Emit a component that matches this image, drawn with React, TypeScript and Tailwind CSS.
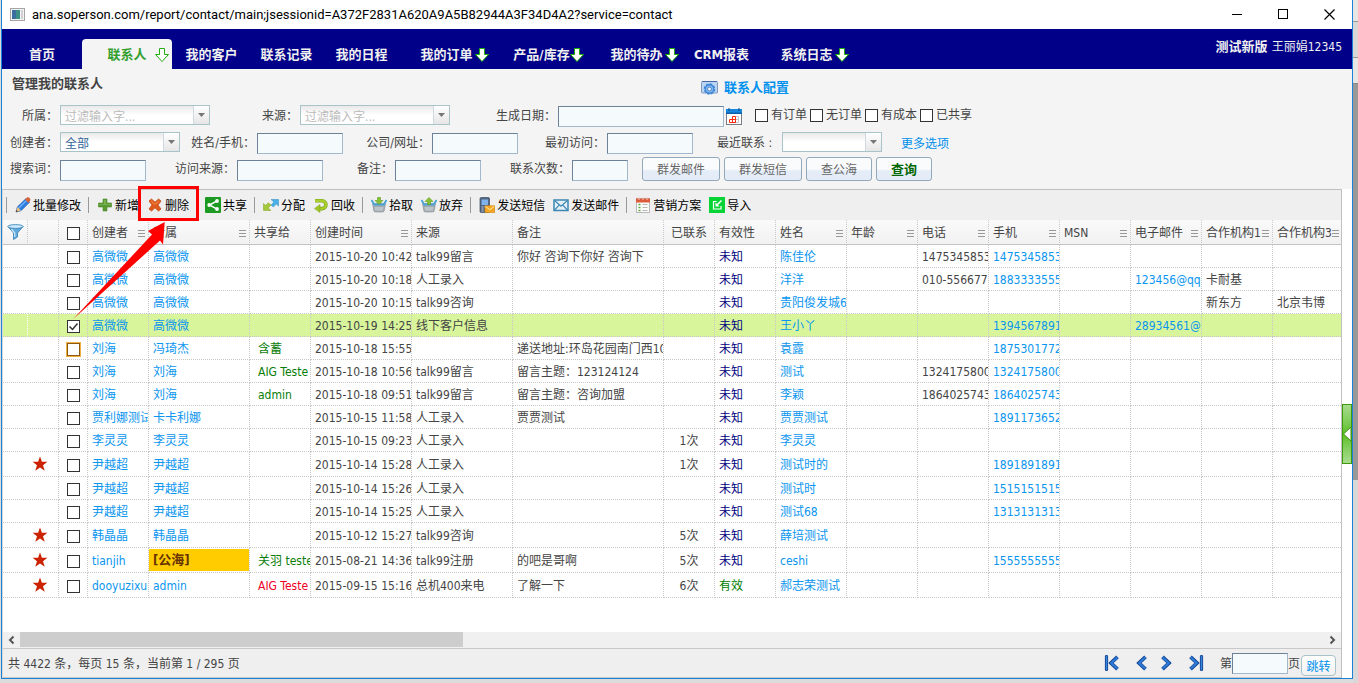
import React, { useState } from 'react';
import clsx from 'clsx';

interface Contact {
    star?: boolean;
    creator: string;
    owner: string;
    publicPool?: boolean;
    shared?: string;
    sharedAlert?: boolean;
    createdAt: string;
    source?: string;
    remark?: string;
    times?: string;
    valid?: boolean;
    name: string;
    phone?: string;
    mobile?: string;
    email?: string;
    org1?: string;
    org3?: string;
}

const contacts: Contact[] = [
    { creator: '高微微', owner: '高微微', createdAt: '2015-10-20 10:42', source: 'talk99留言', remark: '你好 咨询下你好 咨询下', name: '陈佳伦', phone: '1475345853', mobile: '1475345853' },
    { creator: '高微微', owner: '高微微', createdAt: '2015-10-20 10:18', source: '人工录入', name: '洋洋', phone: '010-556677', mobile: '1883333555', email: '123456@qq', org1: '卡耐基' },
    { creator: '高微微', owner: '高微微', createdAt: '2015-10-20 10:15', source: 'talk99咨询', name: '贵阳俊发城6', org1: '新东方', org3: '北京韦博' },
    { creator: '高微微', owner: '高微微', createdAt: '2015-10-19 14:25', source: '线下客户信息', name: '王小丫', mobile: '1394567891', email: '28934561@' },
    { creator: '刘海', owner: '冯琦杰', shared: '含蓄', createdAt: '2015-10-18 15:55', remark: '递送地址:环岛花园南门西10', name: '袁露', mobile: '1875301772' },
    { creator: '刘海', owner: '刘海', shared: 'AIG Teste', createdAt: '2015-10-18 10:56', source: 'talk99留言', remark: '留言主题：123124124', name: '测试', phone: '1324175800', mobile: '1324175800' },
    { creator: '刘海', owner: '刘海', shared: 'admin', createdAt: '2015-10-18 09:51', source: 'talk99留言', remark: '留言主题：咨询加盟', name: '李颖', phone: '1864025743', mobile: '1864025743' },
    { creator: '贾利娜测试', owner: '卡卡利娜', createdAt: '2015-10-15 11:58', source: '人工录入', remark: '贾贾测试', name: '贾贾测试', mobile: '1891173652' },
    { creator: '李灵灵', owner: '李灵灵', createdAt: '2015-10-15 09:23', source: '人工录入', times: '1次', name: '李灵灵' },
    { star: true, creator: '尹越超', owner: '尹越超', createdAt: '2015-10-14 15:28', source: '人工录入', times: '1次', name: '测试时的', mobile: '1891891891' },
    { creator: '尹越超', owner: '尹越超', createdAt: '2015-10-14 15:26', source: '人工录入', name: '测试时', mobile: '1515151515' },
    { creator: '尹越超', owner: '尹越超', createdAt: '2015-10-14 15:25', source: '人工录入', name: '测试68', mobile: '1313131313' },
    { star: true, creator: '韩晶晶', owner: '韩晶晶', createdAt: '2015-10-12 15:27', source: 'talk99咨询', times: '5次', name: '薛培测试' },
    { star: true, creator: 'tianjih', owner: '[公海]', publicPool: true, shared: '关羽 teste', createdAt: '2015-08-21 14:36', source: 'talk99注册', remark: '的吧是哥啊', times: '5次', name: 'ceshi', mobile: '1555555555' },
    { star: true, creator: 'dooyuzixun', owner: 'admin', shared: 'AIG Teste', sharedAlert: true, createdAt: '2015-09-15 15:16', source: '总机400来电', remark: '了解一下', times: '6次', valid: true, name: '郝志荣测试' },
];

const columns = [
    { label: '创建者', width: 'w-[61px]', menu: true },
    { label: '所属', width: 'w-[101px]', menu: true },
    { label: '共享给', width: 'w-[61px]' },
    { label: '创建时间', width: 'w-[101px]', menu: true },
    { label: '来源', width: 'w-[101px]' },
    { label: '备注', width: 'w-[151px]' },
    { label: '已联系', width: 'w-[51px]', center: true },
    { label: '有效性', width: 'w-[61px]' },
    { label: '姓名', width: 'w-[71px]', menu: true },
    { label: '年龄', width: 'w-[71px]', menu: true },
    { label: '电话', width: 'w-[71px]', menu: true },
    { label: '手机', width: 'w-[71px]', menu: true },
    { label: 'MSN', width: 'w-[71px]', menu: true },
    { label: '电子邮件', width: 'w-[71px]', menu: true },
    { label: '合作机构1', width: 'w-[71px]', menu: true },
    { label: '合作机构3', width: '', menu: true },
];

const navItems = [
    { label: '我的客户' },
    { label: '联系记录' },
    { label: '我的日程' },
    { label: '我的订单', arrow: true },
    { label: '产品/库存', arrow: true },
    { label: '我的待办', arrow: true },
    { label: 'CRM报表' },
    { label: '系统日志', arrow: true },
];

/* ---------- icons ---------- */

const DownArrow = ({ className }: { className?: string }) => (
    <svg viewBox="0 0 14 14" className={clsx('h-3.5 w-3.5', className)} fill="#fff" stroke="#1fae0c" strokeWidth="1">
        <path d="M4.500.5h5v6h4L7 13.500.5 6.500h4z" />
    </svg>
);

const PencilIcon = () => (
    <svg viewBox="0 0 16 16" className="h-4 w-4">
        <path d="M1 15l1.300-5L11 1.600l3.600 3.500L6 13.700z" fill="#2b7de0" stroke="#1a56ac" strokeWidth=".7" />
        <path d="M3.200 10.400l8.600-8.200 1 1-8.500 8.200z" fill="#6db0fa" />
        <path d="M10 2.500l1.700-1.700c.8-.8 2-.6 2.900.3.9.9 1 2 .3 2.900l-1.600 1.800z" fill="#d8623a" />
        <path d="M1 15l1.400-4.900 3.600 3.500z" fill="#f3c37a" />
        <path d="M1 15l.5-1.900 1.400 1.400z" fill="#333" />
    </svg>
);

const PlusIcon = () => (
    <svg viewBox="0 0 16 16" className="h-4 w-4">
        <path d="M6 2h4v4h4.500v4H10v4H6v-4H1.500V6H6z" fill="#5b9a32" stroke="#4b8a28" strokeWidth=".6" />
        <path d="M7 3h2v4h4.500v1H2.500V7H7z" fill="#78b04e" />
    </svg>
);

const CrossIcon = () => (
    <svg viewBox="0 0 16 16" className="h-4 w-4">
        <path d="M2 4l2.500-2L8 5.200 11.500 2 14 4l-3 4 3 4-2.500 2L8 10.800 4.500 14 2 12l3-4z" fill="#dd5a1c" stroke="#c44a12" strokeWidth=".8" strokeLinejoin="round" />
        <path d="M3.500 4l1-.8L8 6.500l3.500-3.300 1 .8-2.800 3.400H6.300z" fill="#ea7638" />
    </svg>
);

const ShareIcon = () => (
    <svg viewBox="0 0 16 16" className="h-4 w-4">
        <rect width="16" height="16" rx="1" fill="#1d9a21" />
        <path d="M12 3.800L4.500 8 12 12.200" fill="none" stroke="#fff" strokeWidth="1.500" />
        <circle cx="12" cy="4" r="1.900" fill="#fff" />
        <circle cx="4.200" cy="8" r="1.900" fill="#fff" />
        <circle cx="12" cy="12" r="1.900" fill="#fff" />
    </svg>
);

const AssignIcon = () => (
    <svg viewBox="0 0 16 16" className="h-4 w-4">
        <path d="M8 2.500h7.500V9l-2.200-2-3 3L8 8l3-3z" fill="#4bb1e8" stroke="#2c88c0" strokeWidth=".5" />
        <path d="M8 13.500H.5V6.500l2.200 2 2.500-2.700L8 8l-2.800 3z" fill="#a3c83a" stroke="#7fa021" strokeWidth=".5" />
    </svg>
);

const RecycleIcon = () => (
    <svg viewBox="0 0 16 16" className="h-4 w-4">
        <path d="M2 3.800h7a3.900 3.900 0 010 7.800H6" fill="none" stroke="#7da517" strokeWidth="3.600" />
        <path d="M2 3.800h7a3.900 3.900 0 010 7.800H6" fill="none" stroke="#a9cf2f" strokeWidth="2.400" />
        <path d="M7 7.500v8L1.500 11.600z" fill="#a0c626" stroke="#7da517" strokeWidth=".5" />
    </svg>
);

const BasketIcon = ({ up }: { up?: boolean }) => (
    <svg viewBox="0 0 16 16" className="h-4 w-4">
        <path d="M1.500 6.500h13L13 14.500c-.2.700-9.800.700-10 0z" fill="#a3abb2" stroke="#858d94" strokeWidth=".6" />
        <path d="M3.500 10h9l-.6 3.700H4.100z" fill="#bcc3c9" />
        <path d="M.5 3l2.800 4.500h9.400L15.500 3" fill="none" stroke="#4aa3d6" strokeWidth="1.800" />
        <path d={up ? 'M6.500 7.500h3V4.500h2.500L8 .5 4 4.500h2.500z' : 'M6.500.5h3v3H12l-4 4-4-4h2.500z'} fill="#86c035" stroke="#5e9a1c" strokeWidth=".6" />
    </svg>
);

const SmsIcon = () => (
    <svg viewBox="0 0 16 16" className="h-4 w-4">
        <rect x="1" y=".5" width="9.500" height="15" rx="1.200" fill="#52657f" stroke="#3b4c63" strokeWidth=".7" />
        <rect x="2.500" y="2.500" width="6.500" height="5.500" fill="#7fb1ea" />
        <path d="M2.500 10h2m1 0h2M2.500 12h2m-2 2h2" stroke="#c3ccd8" strokeWidth="1" />
        <rect x="6" y="8.800" width="9.700" height="6.700" fill="#f5a81f" stroke="#cf8410" strokeWidth=".6" />
        <path d="M6.300 9.200l4.500 3.600 4.600-3.600" fill="none" stroke="#fff0c4" strokeWidth=".9" />
    </svg>
);

const MailIcon = () => (
    <svg viewBox="0 0 16 16" className="h-4 w-4">
        <rect x="1" y="3" width="14" height="10.500" fill="#e3f0f8" stroke="#3c86b4" strokeWidth="1.500" />
        <path d="M1.800 3.800L8 9.300l6.200-5.500M1.800 12.800l4.500-5m7.900 5l-4.500-5" fill="none" stroke="#3c86b4" strokeWidth="1.200" />
    </svg>
);

const PlanIcon = () => (
    <svg viewBox="0 0 16 16" className="h-4 w-4">
        <rect x="1.500" y="1.500" width="13" height="14" fill="#fcfcfc" stroke="#a8a8a8" strokeWidth=".8" />
        <path d="M1 1.500h14v4H1z" fill="#dd5a3a" />
        <path d="M4 0v3m4-3v3m4-3v3" stroke="#f3c9bd" strokeWidth="1" />
        <path d="M3.500 7.500h2m-2 3h2m-2 3h2" stroke="#5da83a" strokeWidth="1.600" />
        <path d="M7.500 7.500h5m-5 3h5m-5 3h5" stroke="#b6b6b6" strokeWidth="1" />
    </svg>
);

const ImportIcon = () => (
    <svg viewBox="0 0 16 16" className="h-4 w-4">
        <rect width="16" height="16" fill="#06d435" />
        <path d="M7.500 4.500h-3v7.500h7.500V9" fill="none" stroke="#fff" strokeWidth="1.200" />
        <path d="M12.500 3.500L8 8" stroke="#fff" strokeWidth="1.500" />
        <path d="M6.500 5.500v4h4z" fill="#fff" />
    </svg>
);

const ConfigIcon = () => (
    <svg viewBox="0 0 17 16" className="h-4 w-[17px]">
        <rect x=".5" y="1.500" width="16" height="11.500" rx="1" fill="#b9d5f2" stroke="#8097c0" />
        <path d="M1 1.500h15" stroke="#4668a5" strokeWidth="1" />
        <circle cx="8.500" cy="9" r="4.900" fill="#3f86d8" stroke="#3f86d8" strokeWidth="1.600" strokeDasharray="2.400 1.400" />
        <circle cx="8.500" cy="9" r="3.600" fill="#85b9ee" />
        <circle cx="8.500" cy="9" r="1.900" fill="#f2f8fe" stroke="#2f68b4" strokeWidth=".7" />
    </svg>
);

const CalendarIcon = () => (
    <svg viewBox="0 0 16 17" className="h-[17px] w-4">
        <rect x=".5" y="1.500" width="15" height="15" fill="#fff" stroke="#777c85" />
        <path d="M0 1h16v5H0z" fill="#1687dd" />
        <path d="M0 4.500h16v1.500H0z" fill="#0a5eaa" />
        <path d="M3 0v3m10-3v3" stroke="#0b4a86" strokeWidth="1" />
        <path d="M3.500 11.500h6v3h-6zM6.500 8.500h3v6h-3z" fill="none" stroke="#fa2a0a" />
        <path d="M10 8.500h2.500v6H10M10 11.500h2.500" fill="none" stroke="#c2c6cc" />
    </svg>
);

const FilterIcon = () => (
    <svg viewBox="0 0 17 16" className="h-4 w-[17px]">
        <path d="M1 2.500L6.500 9v6.500l4-2.500V9L16 2.500z" fill="#5fa9dc" stroke="#2f7fb8" strokeWidth=".8" />
        <path d="M4.500 5l3.200 4v4" fill="none" stroke="#c6e4f8" strokeWidth="1.300" />
        <ellipse cx="8.500" cy="2.500" rx="7.700" ry="1.900" fill="#cfe9fa" stroke="#2f7fb8" strokeWidth=".8" />
    </svg>
);

const MenuLines = () => (
    <svg viewBox="0 0 7 7" className="h-[7px] w-[7px] shrink-0" shapeRendering="crispEdges">
        <path d="M0 .500h7M0 3.500h7M0 6.500h7" stroke="#999" />
    </svg>
);

const StarIcon = () => (
    <svg viewBox="0 0 16 16" className="mx-auto block h-4 w-4">
        <path d="M8 .600l1.900 5.200h5.500L11 9.200l1.700 5.600L8 11.500l-4.700 3.300L5 9.200.600 5.800h5.500z" fill="#cc2200" />
    </svg>
);

const PagerIcon = ({ last, next }: { last?: boolean; next?: boolean }) => (
    <svg viewBox="0 0 16 16" className={clsx('h-4 w-4', next && 'rotate-180')}>
        {last && <path d="M2.500 1.500v13" stroke="#16499a" strokeWidth="3.200" strokeLinecap="round" />}
        {last && <path d="M2.500 1.500v13" stroke="#3a86dc" strokeWidth="1.300" strokeLinecap="round" />}
        <path d="M13.500 1.800L7 8l6.500 6.200" fill="none" stroke="#16499a" strokeWidth="3.800" />
        <path d="M13.300 2.200L7.300 8l6 5.800" fill="none" stroke="#2f7bd6" strokeWidth="2" />
    </svg>
);

/* ---------- form controls ---------- */

interface FieldProps {
    id: string;
    label: string;
    labelClass: string;
    children: React.ReactNode;
}

const Field = ({ id, label, labelClass, children }: FieldProps) => (
    <>
        <label htmlFor={id} className={clsx('flex shrink-0 items-center justify-end self-stretch whitespace-nowrap pr-0.5', labelClass)}>
            {label}
        </label>
        {children}
    </>
);

const TextBox = ({ id, className }: { id: string; className: string }) => (
    <input
        id={id}
        type="text"
        className={clsx('h-[21px] shrink-0 border border-[#a3b8cc] border-l-[#6d8299] border-t-[#6d8299] bg-[#f5fafd] px-1 outline-none', className)}
    />
);

const Combo = ({ id, option, className, textClass }: { id: string; option: string; className: string; textClass?: string }) => (
    <div className={clsx('relative mb-0.5 h-5 shrink-0', className)}>
        <select
            id={id}
            className={clsx('h-full w-full appearance-none border border-[#a9c3cb] bg-linear-to-b from-[#e9e9e9] via-white to-white pl-1 pt-0.5 outline-none', textClass)}
        >
            <option>{option}</option>
        </select>
        <span className="pointer-events-none absolute inset-y-px right-px flex w-4 items-center justify-center border-l border-[#cfdade] bg-linear-to-b from-white to-[#e6e6e6]">
            <svg viewBox="0 0 7 4" className="h-1 w-[7px]">
                <path d="M0 0h7L3.500 4z" fill="#777" />
            </svg>
        </span>
    </div>
);

const Tick = ({ label, checked, onChange, focused, id }: { label?: string; checked: boolean; onChange: () => void; focused?: boolean; id?: string }) => (
    <span className="relative block h-[13px] w-[13px] shrink-0">
        <input
            id={id}
            type="checkbox"
            aria-label={label}
            checked={checked}
            onChange={onChange}
            className={clsx('block h-[13px] w-[13px] appearance-none border bg-white', focused ? 'border-[#8a5a10] ring-1 ring-[#f0b040]' : 'border-[#333]')}
        />
        {checked && (
            <svg viewBox="0 0 13 13" className="pointer-events-none absolute inset-0" fill="none" stroke="#333" strokeWidth="1.500">
                <path d="M2.500 6.500l3 3 5-6" />
            </svg>
        )}
    </span>
);

const FlagBox = ({ id, label }: { id: string; label: string }) => {
    const [on, setOn] = useState(false);
    return (
        <span className="flex h-5 items-center gap-[3px]">
            <Tick id={id} checked={on} onChange={() => setOn(!on)} />
            <label htmlFor={id} className="whitespace-nowrap pr-[3px]">{label}</label>
        </span>
    );
};

const FormButton = ({ className, children }: { className: string; children: React.ReactNode }) => (
    <button
        type="button"
        className={clsx('h-6 shrink-0 rounded-[3px] border border-[#93a8bb] bg-linear-to-b from-[#f9fbfd] from-50% to-[#e3ecf7] to-60% pt-0.5', className)}
    >
        {children}
    </button>
);

const ToolButton = ({ icon, label, className }: { icon: React.ReactNode; label: string; className?: string }) => (
    <button type="button" className={clsx('flex shrink-0 items-center gap-0.5 whitespace-nowrap text-black', className)}>
        {icon}
        <span className="pt-0.5">{label}</span>
    </button>
);

const Divider = () => <span className="-ml-px h-4 w-px shrink-0 bg-[#999]" />;

/* ---------- page sections ---------- */

const TitleBar = () => (
    <header className="flex h-[29px] items-center bg-white pl-2 pr-[17px] font-['Roboto','Open_Sans',sans-serif] text-black">
        <svg viewBox="0 0 15 13" className="h-[13px] w-[15px] shrink-0">
            <rect x=".5" y=".5" width="14" height="12" fill="#f3f3f3" stroke="#a5a5a5" />
            <path d="M2 2h8v9H2z" fill="#3d8f86" />
            <path d="M2 2h4v9H2z" fill="#3c6fa0" />
            <path d="M11 2h2v9h-2z" fill="#d0d0d0" />
        </svg>
        <span className="ml-[7px] truncate text-[13px]">ana.soperson.com/report/contact/main;jsessionid=A372F2831A620A9A5B82944A3F34D4A2?service=contact</span>
        <div className="ml-auto flex shrink-0 gap-[35px]">
            <button type="button" aria-label="Minimize">
                <svg viewBox="0 0 11 11" className="h-[11px] w-[11px]" shapeRendering="crispEdges"><path d="M0 5.500h10" stroke="#000" /></svg>
            </button>
            <button type="button" aria-label="Maximize">
                <svg viewBox="0 0 11 11" className="h-[11px] w-[11px]" fill="none" shapeRendering="crispEdges"><path d="M.5.5h9v9h-9z" stroke="#000" /></svg>
            </button>
            <button type="button" aria-label="Close">
                <svg viewBox="0 0 11 11" className="h-[11px] w-[11px]" stroke="#000" strokeWidth="1.200"><path d="M.5.5l10 10m0-10l-10 10" /></svg>
            </button>
        </div>
    </header>
);

const NavBar = () => (
    <nav className="flex h-10 items-end bg-[#000088] text-[13px] font-bold text-[#f0f0f0]">
        <a href="#home" className="flex h-[30px] w-20 shrink-0 items-center justify-center pt-0.5">首页</a>
        <a href="#contacts" className="relative mr-0.5 flex h-[30px] w-[90px] shrink-0 items-center justify-center rounded-t-[4px] bg-[#f4f4f4] pt-0.5 text-[#339f2f]">
            联系人
            <DownArrow className="absolute right-[3px] top-[9px]" />
        </a>
        {navItems.map((item) => (
            <a
                key={item.label}
                href={`#${item.label}`}
                className={clsx('relative flex h-[30px] shrink-0 items-center justify-center whitespace-nowrap pt-0.5', item.arrow ? 'w-[95px]' : 'w-[75px]')}
            >
                {item.label}
                {item.arrow && <DownArrow className="absolute right-[5px] top-[9px]" />}
            </a>
        ))}
        <p className="ml-auto mr-2.5 self-start whitespace-nowrap pt-2 leading-5">
            测试新版 <span className="text-[12px] font-normal">王丽娟12345</span>
        </p>
    </nav>
);

const FilterForm = () => (
    <form className="bg-[#f4f4f4] pb-2" onSubmit={(event) => event.preventDefault()}>
        <div className="flex h-9 items-start text-[13px] font-bold">
            <h1 className="w-[699px] shrink-0 pl-2.5 pt-[5px] leading-5">管理我的联系人</h1>
            <a href="#config" className="flex items-center gap-1.5 pt-[9px] leading-5 text-[#0090ee]">
                <ConfigIcon />
                联系人配置
            </a>
        </div>

        <div className="flex h-[22px] items-end">
            <Field id="owner" label="所属：" labelClass="w-[58px]">
                <Combo id="owner" option="过滤输入字..." className="w-[150px]" textClass="text-[#bbb]" />
            </Field>
            <Field id="source" label="来源：" labelClass="w-[90px]">
                <Combo id="source" option="过滤输入字..." className="w-[150px]" textClass="text-[#bbb]" />
            </Field>
            <Field id="created" label="生成日期：" labelClass="w-[108px]">
                <TextBox id="created" className="w-[166px]" />
            </Field>
            <button type="button" aria-label="选择日期" className="mb-0.5 ml-0.5"><CalendarIcon /></button>
            <div className="mb-0.5 ml-[13px] flex">
                <FlagBox id="has-order" label="有订单" />
                <FlagBox id="no-order" label="无订单" />
                <FlagBox id="has-cost" label="有成本" />
                <FlagBox id="is-shared" label="已共享" />
            </div>
        </div>

        <div className="mt-[5px] flex h-[22px] items-end">
            <Field id="creator" label="创建者：" labelClass="w-[58px]">
                <Combo id="creator" option="全部" className="w-[120px]" textClass="text-[#336699]" />
            </Field>
            <Field id="name" label="姓名/手机：" labelClass="w-[77px]"><TextBox id="name" className="w-[86px]" /></Field>
            <Field id="company" label="公司/网址：" labelClass="w-[89px]"><TextBox id="company" className="w-[86px]" /></Field>
            <Field id="first-visit" label="最初访问：" labelClass="w-[89px]"><TextBox id="first-visit" className="w-[86px]" /></Field>
            <label htmlFor="last-contact" className="flex w-[89px] shrink-0 items-center self-stretch whitespace-nowrap pl-6">最近联系 :</label>
            <Combo id="last-contact" option="" className="w-[100px]" />
            <a href="#more" className="ml-[19px] whitespace-nowrap leading-5 text-[#0090ee]">更多选项</a>
        </div>

        <div className="mt-[3px] flex h-6 items-end">
            <Field id="keyword" label="搜索词：" labelClass="w-[58px]"><TextBox id="keyword" className="w-[86px]" /></Field>
            <Field id="visit-source" label="访问来源：" labelClass="w-[91px]"><TextBox id="visit-source" className="w-[86px]" /></Field>
            <Field id="remark" label="备注：" labelClass="w-[72px]"><TextBox id="remark" className="w-[86px]" /></Field>
            <Field id="times" label="联系次数：" labelClass="w-[91px]"><TextBox id="times" className="w-14" /></Field>
            <div className="ml-3.5 flex gap-1 text-[#666]">
                <FormButton className="w-[78px]">群发邮件</FormButton>
                <FormButton className="w-[78px]">群发短信</FormButton>
                <FormButton className="w-[66px]">查公海</FormButton>
                <FormButton className="w-14 text-[13px] font-bold text-[#006600]">查询</FormButton>
            </div>
        </div>
    </form>
);

const Toolbar = () => (
    <div className="flex h-[30px] items-center gap-2 bg-[#efefef] pl-1">
        <Divider />
        <ToolButton icon={<PencilIcon />} label="批量修改" />
        <Divider />
        <ToolButton icon={<PlusIcon />} label="新增" />
        <ToolButton icon={<CrossIcon />} label="删除" className="mr-2" />
        <ToolButton icon={<ShareIcon />} label="共享" />
        <Divider />
        <ToolButton icon={<AssignIcon />} label="分配" />
        <ToolButton icon={<RecycleIcon />} label="回收" />
        <Divider />
        <ToolButton icon={<BasketIcon />} label="拾取" />
        <ToolButton icon={<BasketIcon up />} label="放弃" />
        <Divider />
        <ToolButton icon={<SmsIcon />} label="发送短信" />
        <ToolButton icon={<MailIcon />} label="发送邮件" />
        <Divider />
        <ToolButton icon={<PlanIcon />} label="营销方案" />
        <ToolButton icon={<ImportIcon />} label="导入" />
    </div>
);

const Cell = ({ pad = 'pl-1 pt-0.5', className, children }: { pad?: string; className?: string; children?: React.ReactNode }) => (
    <td className={clsx('overflow-hidden whitespace-nowrap border-b border-r border-dotted border-[#c8c8c8]', pad, className)}>{children}</td>
);

const ContactTable = () => {
    const [checked, setChecked] = useState<number[]>([3]);

    const toggle = (index: number) => {
        setChecked(checked.includes(index) ? checked.filter((i) => i !== index) : [...checked, index]);
    };

    const toggleAll = () => {
        setChecked(checked.length === contacts.length ? [] : contacts.map((_, index) => index));
    };

    const headCell = 'border-b border-r border-b-[#c4c4c4] border-r-[#c8c8c8] [border-right-style:dotted] p-0 font-normal';

    return (
        <table className="w-full table-fixed border-separate border-spacing-0 leading-5">
            <thead>
                <tr className="h-[25px] bg-linear-to-b from-[#fafafa] to-[#f1f1f1]">
                    <th className={clsx(headCell, 'w-[25px]')}><div className="pl-1"><FilterIcon /></div></th>
                    <th className={clsx(headCell, 'w-[31px]')} />
                    <th className={clsx(headCell, 'w-[29px]')}>
                        <div className="flex justify-center pt-0.5"><Tick label="全选" checked={checked.length === contacts.length} onChange={toggleAll} /></div>
                    </th>
                    {columns.map((col) => (
                        <th key={col.label} className={clsx(headCell, col.width, 'last:border-r-0')}>
                            <div className={clsx('flex items-center overflow-hidden whitespace-nowrap pt-0.5', col.center ? 'justify-center' : 'justify-between pl-1 pr-[3px]')}>
                                {col.label}
                                {col.menu && <MenuLines />}
                            </div>
                        </th>
                    ))}
                </tr>
            </thead>
            <tbody>
                {contacts.map((row, index) => (
                    <tr key={index} className={clsx(row.star ? 'h-[25px]' : 'h-[23px]', checked.includes(index) && 'bg-[#d8f59c]')}>
                        <Cell className="border-r-white" />
                        <Cell pad="pr-1.5">{row.star && <StarIcon />}</Cell>
                        <Cell pad="pt-0.5">
                            <div className="flex justify-center">
                                <Tick label={row.name} checked={checked.includes(index)} focused={index === 4} onChange={() => toggle(index)} />
                            </div>
                        </Cell>
                        <Cell><a href="#creator" className="text-[#0a95ef]">{row.creator}</a></Cell>
                        {row.publicPool ? (
                            <Cell pad="p-0"><div className="h-[22px] bg-[#ffcc00] pl-1 text-[13px] font-bold leading-[22px] text-[#663300]">{row.owner}</div></Cell>
                        ) : (
                            <Cell><a href="#owner" className="text-[#0a95ef]">{row.owner}</a></Cell>
                        )}
                        <Cell pad="pl-2 pt-0.5" className={row.sharedAlert ? 'text-[#ee0022]' : 'text-[#087d08]'}>{row.shared}</Cell>
                        <Cell>{row.createdAt}</Cell>
                        <Cell>{row.source}</Cell>
                        <Cell>{row.remark}</Cell>
                        <Cell pad="pt-0.5" className="text-center">{row.times}</Cell>
                        <Cell className={row.valid ? 'text-[#008000]' : 'text-[#000080]'}>{row.valid ? '有效' : '未知'}</Cell>
                        <Cell><a href="#name" className="text-[#0a95ef]">{row.name}</a></Cell>
                        <Cell />
                        <Cell>{row.phone}</Cell>
                        <Cell className="text-[#0a95ef]">{row.mobile}</Cell>
                        <Cell />
                        <Cell className="text-[#0a95ef]">{row.email}</Cell>
                        <Cell>{row.org1}</Cell>
                        <Cell className="border-r-0">{row.org3}</Cell>
                    </tr>
                ))}
            </tbody>
        </table>
    );
};

const ScrollBar = () => (
    <div className="flex h-4 items-center bg-[#f0f0f0]">
        <svg viewBox="0 0 17 16" className="h-4 w-[17px]" fill="none" stroke="#555" strokeWidth="2"><path d="M10.500 4.500L7 8l3.500 3.500" /></svg>
        <div className="h-full flex-1"><div className="h-[15px] w-[34%] bg-[#cdcdcd]" /></div>
        <svg viewBox="0 0 17 16" className="h-4 w-[17px]" fill="none" stroke="#555" strokeWidth="2"><path d="M6.500 4.500L10 8l-3.500 3.500" /></svg>
    </div>
);

const Footer = () => (
    <footer className="flex h-[30px] items-center border-y border-[#c8c8c8] bg-[#efefef] pl-[5px] pr-[5px]">
        <p className="pt-0.5">共 4422 条，每页 15 条，当前第 1 / 295 页</p>
        <div className="ml-auto flex items-center gap-3">
            <button type="button" aria-label="首页"><PagerIcon last /></button>
            <button type="button" aria-label="上一页"><PagerIcon /></button>
            <button type="button" aria-label="下一页"><PagerIcon next /></button>
            <button type="button" aria-label="末页"><PagerIcon last next /></button>
        </div>
        <label htmlFor="page" className="ml-4 pt-0.5">第</label>
        <TextBox id="page" className="w-14" />
        <span className="pt-0.5">页</span>
        <button type="button" className="ml-px mt-1 h-[21px] w-[35px] rounded-[4px] border border-[#a9c3cb] bg-linear-to-b from-white to-[#f1f1f1] pt-0.5 text-[#0090ee]">跳转</button>
    </footer>
);

const App = () => (
    <div className="flex min-h-screen bg-[#dcdcdc] pl-px font-['DejaVu_Sans_Condensed','Noto_Sans_CJK_SC',sans-serif] text-[12px] text-[#444]">
        <div className="relative mb-1 flex min-w-0 flex-1 flex-col border border-t-0 border-[#1b82d6] bg-white">
            <TitleBar />
            <NavBar />
            <FilterForm />
            <main className="mr-2.5 flex flex-1 flex-col border-x border-t border-[#c0c0c0] border-l-[#d8d8d8]">
                <Toolbar />
                <ContactTable />
                <div className="flex-1" />
                <ScrollBar />
                <Footer />
            </main>

            {/* side panel handle */}
            <button
                type="button"
                aria-label="展开"
                className="absolute right-0 top-[404px] flex h-[60px] w-2.5 items-center border border-[#3f9b0c] bg-linear-to-b from-[#a8dc8c] via-[#5cc01c] to-[#a8dc8c]"
            >
                <svg viewBox="0 0 8 14" className="h-3.5 w-2"><path d="M8 0v14L.5 7z" fill="#fff" stroke="#3f8f14" /></svg>
            </button>

            {/* annotation: ticked row -> delete */}
            <div className="pointer-events-none absolute left-[136px] top-[186px] h-[35px] w-[61px] border-[3px] border-[#ff0000]" />
            <svg viewBox="0 0 94 98" className="pointer-events-none absolute left-[70px] top-[222px] h-[98px] w-[94px]">
                <path d="M92.700 0L76 9l4 3.500L1.300 97 88 18.500l3 4z" fill="#ff0000" />
            </svg>
        </div>

        {/* strip of the window behind */}
        <div className="flex w-[5px] shrink-0 flex-col bg-[#d8d8d8]">
            <div className="h-[22px] border-b border-[#999] bg-[#e6e6e6]" />
            <div className="h-9 border-b border-[#999]" />
            <div className="h-[26px] border-b border-[#888] bg-[#e6e6e6]" />
            <div className="h-[396px] bg-[#999]" />
        </div>
    </div>
);

export default App;
